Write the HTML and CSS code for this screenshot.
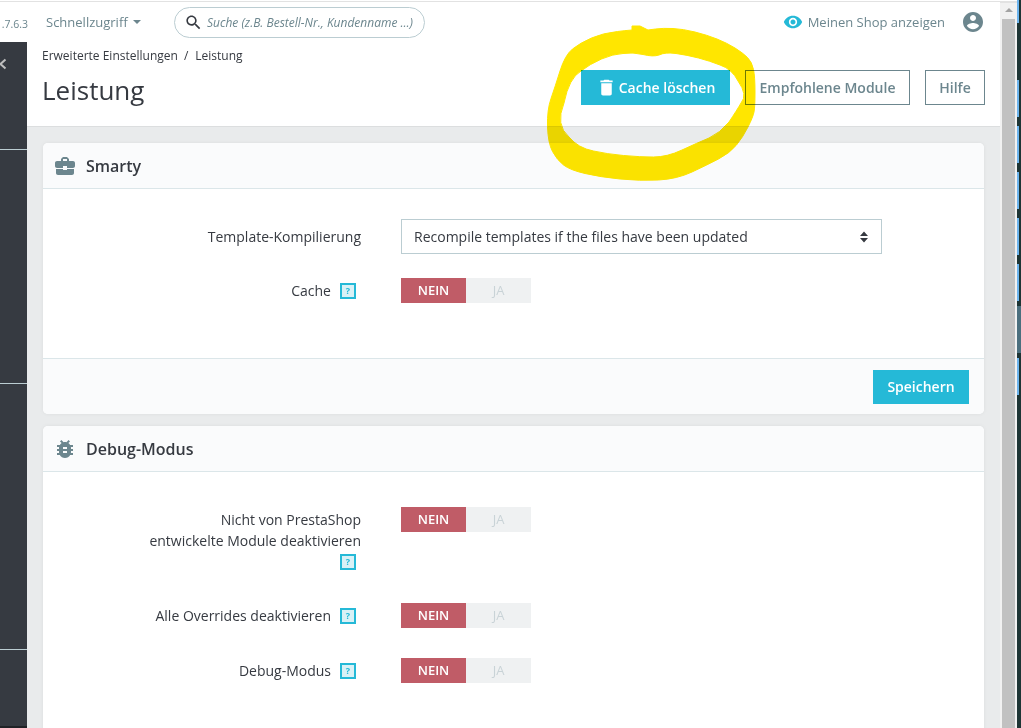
FILE: index.html
```html
<!DOCTYPE html>
<html lang="de">
<head>
<meta charset="utf-8">
<title>Leistung</title>
<link rel="stylesheet" href="styles.css">
</head>
<body>
<div class="app">
  <div class="page">
    <header class="topbar">
      <div class="version"><span>1.7.6.3</span></div>
      <div class="quick">Schnellzugriff<span class="caret"></span></div>
      <div class="search">
        <svg class="search-icon" viewBox="0 0 24 24"><path d="M15.5 14h-.79l-.28-.27C15.41 12.59 16 11.11 16 9.5 16 5.91 13.09 3 9.5 3S3 5.91 3 9.5 5.91 16 9.5 16c1.61 0 3.09-.59 4.23-1.57l.27.28v.79l5 4.99L20.49 19l-4.99-5zm-6 0C7.01 14 5 11.99 5 9.5S7.01 5 9.5 5 14 7.01 14 9.5 11.99 14 9.5 14z"/></svg>
        <span class="search-text">Suche (z.B. Bestell-Nr., Kundenname ...)</span>
      </div>
      <div class="top-right">
        <svg class="eye" viewBox="0 0 24 24"><path d="M12 4.5C7 4.5 2.73 7.61 1 12c1.73 4.39 6 7.5 11 7.5s9.27-3.11 11-7.5c-1.73-4.39-6-7.5-11-7.5zM12 17c-2.76 0-5-2.24-5-5s2.24-5 5-5 5 2.24 5 5-2.24 5-5 5zm0-8c-1.66 0-3 1.34-3 3s1.34 3 3 3 3-1.34 3-3-1.34-3-3-3z"/></svg>
        <span class="shop">Meinen Shop anzeigen</span>
        <svg class="account" viewBox="0 0 24 24"><path d="M12 2C6.48 2 2 6.48 2 12s4.48 10 10 10 10-4.48 10-10S17.52 2 12 2zm0 3c1.66 0 3 1.34 3 3s-1.34 3-3 3-3-1.34-3-3 1.34-3 3-3zm0 14.2c-2.5 0-4.71-1.28-6-3.22.03-1.99 4-3.08 6-3.08 1.99 0 5.97 1.09 6 3.08-1.29 1.94-3.5 3.22-6 3.22z"/></svg>
      </div>
    </header>
    <div class="below">
      <nav class="sidebar">
        <div class="side-section side-a">
          <svg class="chevron" viewBox="0 0 8 12"><path d="M6.5 1.5 1.5 6l5 4.500"/></svg>
        </div>
        <div class="side-section side-b"></div>
        <div class="side-section side-c"></div>
        <div class="side-section side-d"></div>
        <div class="side-foot"></div>
      </nav>
      <main class="content">
        <div class="head-panel">
          <div class="head-left">
            <div class="breadcrumb"><span>Erweiterte Einstellungen</span><span class="sep">/</span><span>Leistung</span></div>
            <h1>Leistung</h1>
          </div>
          <div class="head-actions">
            <a class="btn btn-primary btn-cache">
              <svg class="trash" viewBox="0 0 24 24"><path d="M6 19c0 1.100.9 2 2 2h8c1.100 0 2-.9 2-2V7H6v12zM19 4h-3.500l-1-1h-5l-1 1H5v2h14V4z"/></svg>
              Cache löschen
            </a>
            <a class="btn btn-outline btn-modules">Empfohlene Module</a>
            <a class="btn btn-outline btn-help">Hilfe</a>
          </div>
        </div>

        <section class="card">
          <div class="card-head">
            <svg class="card-icon" viewBox="0 0 24 24"><path d="M10 16v-1H3.010L3 19c0 1.110.89 2 2 2h14c1.110 0 2-.89 2-2v-4h-7v1h-4zm10-9h-4.010V5l-2-2h-4l-2 2v2H4c-1.100 0-2 .9-2 2v3c0 1.110.89 2 2 2h6v-2h4v2h6c1.100 0 2-.9 2-2V9c0-1.100-.9-2-2-2zm-6 0h-4V5h4v2z"/></svg>
            <h2>Smarty</h2>
          </div>
          <div class="card-body body-smarty">
            <div class="row row-select">
              <label class="label">Template-Kompilierung</label>
              <div class="select">
                <span>Recompile templates if the files have been updated</span>
                <svg class="updown" viewBox="0 0 10 12"><path d="M5 0.500 9 5H1zM5 11.500 1 7h8z"/></svg>
              </div>
            </div>
            <div class="row">
              <label class="label">Cache<span class="help">?</span></label>
              <div class="toggle"><span class="no">NEIN</span><span class="yes">JA</span></div>
            </div>
          </div>
          <div class="card-foot"><a class="btn btn-primary btn-save">Speichern</a></div>
        </section>

        <section class="card">
          <div class="card-head">
            <svg class="card-icon" viewBox="0 0 24 24"><path d="M20 8h-2.810c-.45-.78-1.070-1.450-1.820-1.960L17 4.410 15.590 3l-2.170 2.170C12.960 5.060 12.490 5 12 5c-.49 0-.96.06-1.410.17L8.410 3 7 4.410l1.620 1.630C7.880 6.550 7.260 7.220 6.810 8H4v2h2.090c-.05.33-.09.66-.09 1v1H4v2h2v1c0 .34.04.67.09 1H4v2h2.810c1.040 1.790 2.970 3 5.190 3s4.150-1.210 5.190-3H20v-2h-2.090c.05-.33.09-.66.09-1v-1h2v-2h-2v-1c0-.34-.04-.67-.09-1H20V8zm-6 8h-4v-2h4v2zm0-4h-4v-2h4v2z"/></svg>
            <h2>Debug-Modus</h2>
          </div>
          <div class="card-body body-debug">
            <div class="row">
              <label class="label-multi">Nicht von PrestaShop<br>entwickelte Module deaktivieren<br><span class="help">?</span></label>
              <div class="toggle"><span class="no">NEIN</span><span class="yes">JA</span></div>
            </div>
            <div class="row">
              <label class="label">Alle Overrides deaktivieren<span class="help">?</span></label>
              <div class="toggle"><span class="no">NEIN</span><span class="yes">JA</span></div>
            </div>
            <div class="row">
              <label class="label">Debug-Modus<span class="help">?</span></label>
              <div class="toggle"><span class="no">NEIN</span><span class="yes">JA</span></div>
            </div>
          </div>
        </section>
      </main>
    </div>
  </div>

  <div class="scrollbar">
    <div class="scroll-btn"><span class="scroll-arrow"></span></div>
    <div class="scroll-thumb"></div>
  </div>

  <div class="taskstrip">
    <i class="strip-a"></i><i class="strip-b"></i><i class="strip-c"></i><i class="strip-d"></i><i class="strip-e"></i><i class="strip-f"></i><i class="strip-g"></i><i class="strip-h"></i>
  </div>
</div>

<svg class="scribble" viewBox="0 0 1021 728" width="1021" height="728">
  <path fill-rule="evenodd" stroke-linejoin="round" d="M655.500 29Q663 28 673 28.500Q683 29 695 32Q707 35 717 39Q727 43 735 48Q743 53 747.500 57.500Q752 62 753.500 69.500Q755 77 755 92Q755 107 754 112Q753 117 748 127Q743 137 736.500 145Q730 153 718.500 159Q707 165 692 172Q677 179 658.500 180Q640 181 620 179Q600 177 585 173.500Q570 170 563.500 165Q557 160 552.500 151.500Q548 143 547.500 126.500Q547 110 551 98.500Q555 87 560 71Q565 55 572.500 49Q580 43 591.500 38Q603 33 617.500 31.500Q625 30.500 632 30L632 26 640 26 648 30Z M659 55Q665 52 676 53.500Q687 55 698.500 58Q710 61 720 65Q732 69 738 81Q748 95 741 103Q737 110 729 122Q720 133 709 138Q697 143 682 150Q667 157 653.500 157Q640 157 623.500 155.500Q607 154 593.500 151Q578 148 569 137Q555 125 564 103Q569 78 581 71Q590 64 601.500 59Q613 54 623 53.500Q633 52 643 54.500Q653 57 659 55Z"/>
</svg>
</body>
</html>
```

FILE: styles.css
```css
* { box-sizing: border-box; }
html, body { margin: 0; height: 100%; overflow: hidden; background: #fff; }
body { font-family: "Open Sans", sans-serif; font-size: 14px; color: #363a41; }

.app { display: flex; width: 1021px; height: 728px; overflow: hidden; }
.page { width: 1000px; height: 728px; display: flex; flex-direction: column; overflow: hidden; }

/* top bar */
.topbar { height: 41px; flex: none; display: flex; align-items: center; background: #fff; margin-top: 1px; border-top: 1px solid #e2e2e2; padding-top: 1px; }
.version { width: 28px; flex: none; overflow: hidden; display: flex; justify-content: flex-end; font-size: 10.500px; color: #6c868e; margin-top: 3px; white-space: nowrap; }
.quick { margin-left: 18px; font-size: 13px; color: #6c868e; display: flex; align-items: center; width: 128px; flex: none; margin-top: -1px; }
.caret { width: 0; height: 0; margin-left: 5px; border: 4px solid transparent; border-top: 4px solid #6c868e; border-bottom: 0; }
.search { width: 251px; height: 31px; flex: none; border: 1px solid #bbcdd2; border-radius: 16px; display: flex; align-items: center; padding-left: 9px; }
.search-icon { width: 19px; height: 19px; fill: #363a41; flex: none; }
.search-text { margin-left: 4px; font-size: 12px; font-style: italic; color: #6c868e; white-space: nowrap; }
.top-right { margin-left: auto; display: flex; align-items: center; padding-right: 15px; margin-top: -1px; }
.eye { width: 20px; height: 20px; fill: #25b9d7; }
.shop { margin-left: 5px; font-size: 13px; color: #6c868e; }
.account { width: 24px; height: 24px; margin-left: 16px; fill: #6c868e; }

/* layout */
.below { flex: 1; min-height: 0; display: flex; }
.sidebar { width: 27px; flex: none; background: #363a41; display: flex; flex-direction: column; overflow: hidden; }
.side-section { flex: none; border-bottom: 1px solid #bbcdd2; }
.side-a { height: 108px; padding-top: 16px; }
.side-b { height: 234px; }
.side-c { height: 266px; }
.side-d { height: 76px; border-bottom: 0; }
.side-foot { height: 2px; background: #202226; }
.chevron { display: block; width: 8px; height: 12px; margin-left: -1px; fill: none; stroke: #bebebe; stroke-width: 2; }
.content { flex: 1; min-width: 0; background: #e9ebec; overflow: hidden; }

/* page header */
.head-panel { height: 85px; background: #fff; border-bottom: 1px solid #dcdedf; display: flex; justify-content: space-between; padding: 0 15px; }
.breadcrumb { font-size: 12px; line-height: 16px; padding-top: 6px; color: #363a41; display: flex; }
.sep { margin: 0 7px 0 6px; }
h1 { margin: 8px 0 0; font-size: 26px; line-height: 36px; font-weight: 400; color: #363a41; }
.head-actions { display: flex; gap: 15px; padding-top: 28px; align-items: flex-start; }

/* buttons */
.btn { height: 35px; display: flex; align-items: center; justify-content: center; font-size: 14px; font-weight: 600; }
.btn-primary { background: #25b9d7; color: #fff; }
.btn-cache { width: 149px; }
.btn-outline { border: 1px solid #6c868e; color: #6c868e; }
.btn-modules { width: 165px; }
.btn-help { width: 60px; }
.trash { width: 21px; height: 21px; fill: #fff; margin-right: 2px; }
.btn-save { width: 96px; height: 34px; padding-bottom: 1px; }

/* cards */
.card { margin: 16px 16px 12px; background: #fff; border-radius: 5px; box-shadow: 0 0 4px 0 rgba(0, 0, 0, .06); overflow: hidden; }
.card + .card { margin-top: 12px; }
.card-head { height: 46px; background: #fafbfc; border-bottom: 1px solid #dbe6e9; display: flex; align-items: center; padding-left: 10px; }
.card-icon { width: 24px; height: 24px; fill: #6c868e; flex: none; }
h2 { margin: 0 0 0 9px; font-size: 16px; font-weight: 600; color: #363a41; }
.card-body { display: flex; flex-direction: column; }
.body-smarty { padding: 30px 0 55px; gap: 24px; }
.body-debug { padding: 35px 0 60px; gap: 30px; }
.row { display: flex; align-items: flex-start; }
.label { width: 318px; height: 25px; flex: none; display: flex; justify-content: flex-end; align-items: center; color: #363a41; font-size: 14px; }
.row-select .label { height: 35px; }
.label-multi { width: 318px; height: 66px; flex: none; text-align: right; line-height: 21px; padding-top: 2px; color: #363a41; font-size: 14px; }
.help { display: block; flex: none; width: 16px; height: 16px; margin: 1px 5px 0 9px; border: 2px solid #25b9d7; background: #d9f1f6; color: #25b9d7; font-size: 9px; font-weight: 700; line-height: 12px; text-align: center; }
.label-multi .help { display: inline-block; margin: 0 5px 0 0; vertical-align: 2px; }
.select { width: 481px; height: 35px; margin-left: 40px; border: 1px solid #bbcdd2; display: flex; align-items: center; justify-content: space-between; padding: 0 12px 0 12px; color: #363a41; font-size: 14px; }
.updown { width: 10px; height: 12px; fill: #363a41; }
.toggle { margin-left: 40px; display: flex; width: 130px; height: 25px; font-size: 13px; font-weight: 600; line-height: 25px; text-align: center; }
.no { width: 65px; background: #c05c67; color: #fff; }
.yes { width: 65px; background: #eff1f2; color: #c9d3d7; font-weight: 400; }
.card-foot { height: 56px; background: #fafbfc; border-top: 1px solid #dbe6e9; display: flex; justify-content: flex-end; align-items: flex-start; padding: 11px 15px 0 0; }

/* scrollbar and strip */
.scrollbar { width: 17px; flex: none; background: #f1f1f1; display: flex; flex-direction: column; align-items: center; border-top: 2px solid #e2e2e2; margin-top: 1px; }
.scroll-btn { height: 16px; width: 13px; display: flex; justify-content: center; padding-top: 5px; flex: none; }
.scroll-arrow { width: 0; height: 0; border: 4px solid transparent; border-bottom: 4px solid #a3a3a3; border-top: 0; }
.scroll-thumb { width: 13px; flex: 1; background: #c1c1c1; }
.taskstrip { width: 4px; flex: none; background: #1e3535; display: flex; flex-direction: column; }
.taskstrip i { display: block; width: 2px; height: 37px; background: #6cb4ee; flex: none; margin-bottom: 9px; }
.taskstrip .strip-a { height: 23px; margin-bottom: 57px; }
.taskstrip .strip-g { height: 47px; background: #4b6f7e; width: 4px; margin-bottom: 5px; margin-top: -4px; }

/* hand-drawn highlight over the screenshot */
.scribble { position: absolute; left: 0; top: 0; pointer-events: none; mix-blend-mode: multiply; fill: #ffe600; stroke: #ffe600; stroke-width: 1; }
```
